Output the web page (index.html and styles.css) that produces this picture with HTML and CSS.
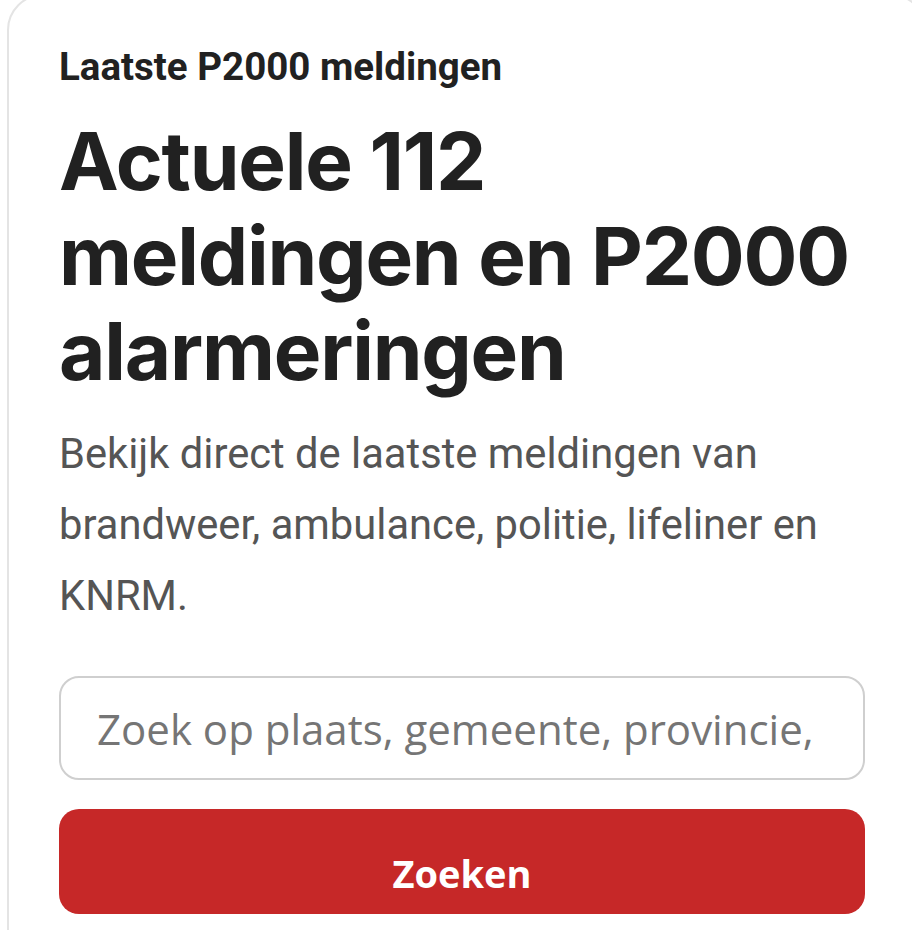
FILE: index.html
```html
<!doctype html>
<html lang="nl">
  <head>
    <meta charset="utf-8">
    <meta name="viewport" content="width=device-width, initial-scale=1">
    <title>P2000 meldingen</title>
    <link rel="stylesheet" href="styles.css">
  </head>
  <body>
    <div class="card">
      <p class="kicker">Laatste P2000 meldingen</p>
      <h1>Actuele 112 meldingen en P2000 alarmeringen</h1>
      <p class="intro">Bekijk direct de laatste meldingen van brandweer, ambulance, politie, lifeliner en KNRM.</p>
      <form class="search" onsubmit="return false">
        <input type="text" name="q" placeholder="Zoek op plaats, gemeente, provincie, regio of capcode">
        <button type="submit">Zoeken</button>
      </form>
    </div>
  </body>
</html>
```

FILE: styles.css
```css
body {
  margin: 0;
  background: #fff;
  color: #212121;
  font-family: Roboto, Arial, sans-serif;
  overflow: hidden;
}
.card {
  margin: -6px 0 0 7px;
  width: 806px;
  padding: 48px 60px 60px 50px;
  border: 2px solid #e4e4e4;
  border-radius: 36px;
  box-sizing: content-box;
}
.kicker {
  margin: 0;
  font-size: 38.5px;
  font-weight: 700;
  line-height: 1.2;
}
.card h1 {
  margin: 23px 0 0;
  font-family: Inter, Arial, sans-serif;
  font-size: 80px;
  font-weight: 700;
  line-height: 95px;
  letter-spacing: -1.2px;
}
.intro {
  margin: 20px 0 0;
  color: #555;
  font-size: 41.7px;
  line-height: 71px;
}
.search {
  display: flex;
  flex-direction: column;
  gap: 29px;
  margin-top: 45px;
}
.search input {
  box-sizing: border-box;
  height: 104px;
  padding: 0 36px;
  border: 2px solid #cfcfcf;
  border-radius: 20px;
  font-family: "Open Sans", Arial, sans-serif;
  font-size: 42px;
  color: #212121;
  outline: none;
}
.search input::placeholder {
  color: #757575;
}
.search button {
  box-sizing: border-box;
  height: 105px;
  padding: 22px 0 0;
  border: none;
  border-radius: 20px;
  background: #c62828;
  color: #fff;
  font-family: "Open Sans", Arial, sans-serif;
  font-size: 38px;
  font-weight: 700;
  cursor: pointer;
}
```
